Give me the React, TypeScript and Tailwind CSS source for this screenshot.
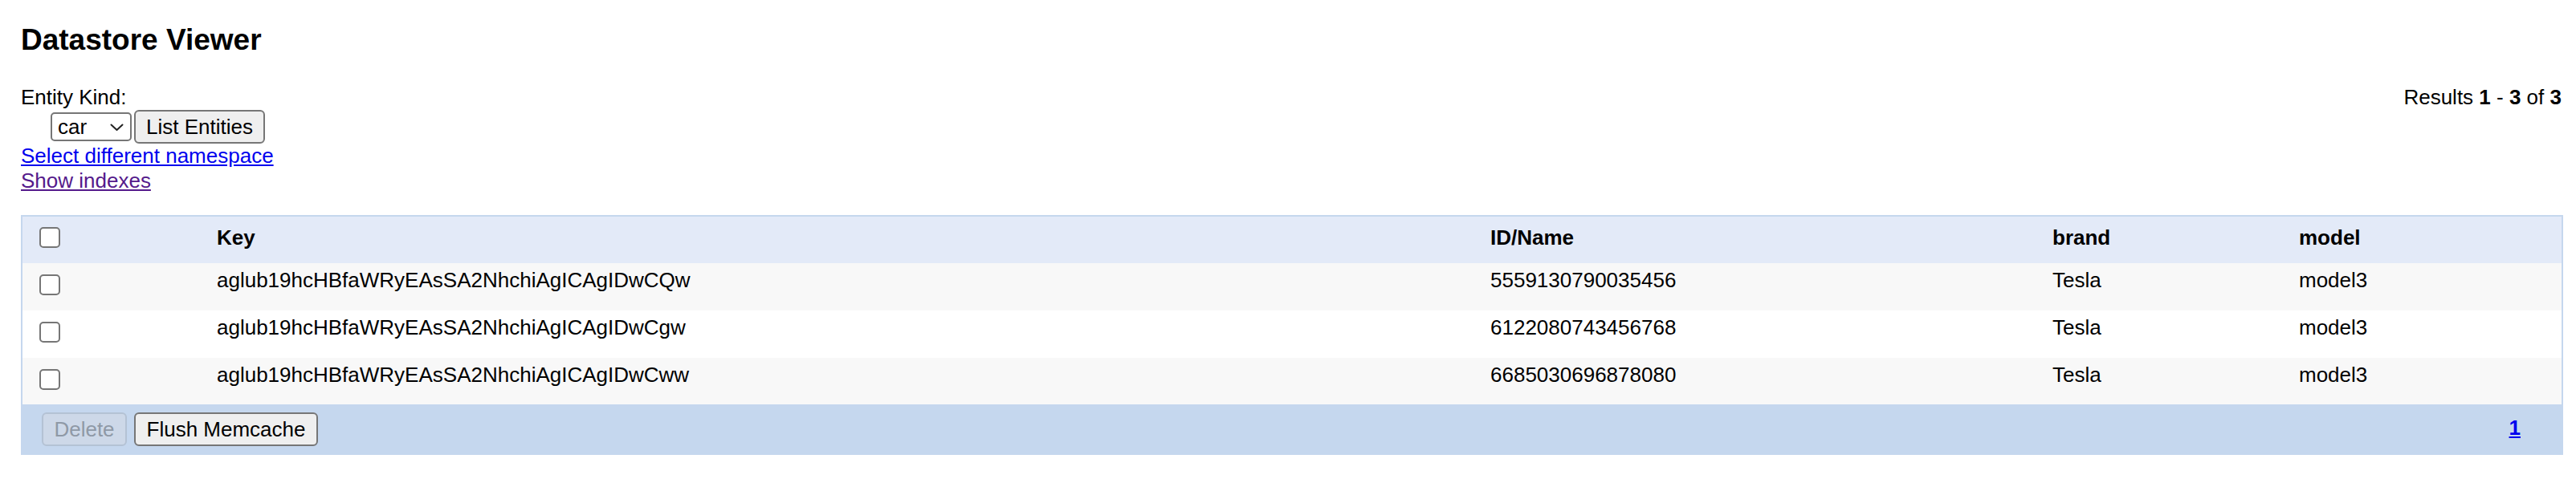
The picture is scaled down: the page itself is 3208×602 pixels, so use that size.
import React from "react";

const rows = [
    { key: "aglub19hcHBfaWRyEAsSA2NhchiAgICAgIDwCQw", id: "5559130790035456", brand: "Tesla", model: "model3" },
    { key: "aglub19hcHBfaWRyEAsSA2NhchiAgICAgIDwCgw", id: "6122080743456768", brand: "Tesla", model: "model3" },
    { key: "aglub19hcHBfaWRyEAsSA2NhchiAgICAgIDwCww", id: "6685030696878080", brand: "Tesla", model: "model3" },
];

function Box() {
    return (
        <span className="block w-[26px] h-[26px] border-2 border-[#767676] rounded-[5px] bg-white" />
    );
}

export default function App() {
    return (
        <div className="min-h-screen bg-white pl-[26px] pr-[16px] text-black text-[26px] font-['Liberation_Sans',Arial,sans-serif]">
            <h1 className="pt-[29px] text-[37px] font-bold leading-[41px]">Datastore Viewer</h1>

            {/* kind picker + result count */}
            <div className="mt-[36px] flex justify-between items-start">
                <div className="flex flex-col items-start">
                    <div className="leading-[30px]">Entity Kind:</div>
                    <div className="flex items-center h-[43px] ml-[37px] gap-[3px]">
                        <div className="relative w-[101px] h-[36px] border-2 border-[#767676] rounded-[5px] bg-white flex items-center pl-[7px]">
                            <span className="leading-[30px]">car</span>
                            <svg className="absolute right-[8px] top-[12px]" width="17" height="10" viewBox="0 0 17 10" fill="none">
                                <path d="M1.5 1.5 L8.5 8 L15.5 1.5" stroke="#222" strokeWidth="2" strokeLinecap="round" strokeLinejoin="round" />
                            </svg>
                        </div>
                        <button className="h-[42px] w-[163px] bg-[#efefef] border-2 border-[#767676] rounded-[6px] leading-[30px]">
                            List Entities
                        </button>
                    </div>
                    <a href="#" className="leading-[31px] text-[#0000ee] underline">Select different namespace</a>
                    <a href="#" className="leading-[31px] text-[#551a8b] underline">Show indexes</a>
                </div>
                <div className="leading-[30px] mr-[2px]">
                    Results <b>1</b> - <b>3</b> of <b>3</b>
                </div>
            </div>

            {/* entity table */}
            <div className="mt-[27px] border-2 border-[#c5d7ee]">
                <div className="flex h-[58px] bg-[#e3eaf8] font-bold">
                    <div className="w-[242px] shrink-0 pl-[21px] pt-[13px]"><Box /></div>
                    <div className="w-[1586px] shrink-0 pt-[11px] leading-[30px]">Key</div>
                    <div className="w-[700px] shrink-0 pt-[11px] leading-[30px]">ID/Name</div>
                    <div className="w-[307px] shrink-0 pt-[11px] leading-[30px]">brand</div>
                    <div className="flex-1 pt-[11px] leading-[30px]">model</div>
                </div>
                {rows.map((r, i) => (
                    <div key={r.id} className={`flex ${i === 2 ? "h-[58px]" : "h-[59px]"} ${i % 2 === 0 ? "bg-[#f8f8f8]" : "bg-white"}`}>
                        <div className="w-[242px] shrink-0 pl-[21px] pt-[14px]"><Box /></div>
                        <div className="w-[1586px] shrink-0 pt-[6px] leading-[30px]">{r.key}</div>
                        <div className="w-[700px] shrink-0 pt-[6px] leading-[30px]">{r.id}</div>
                        <div className="w-[307px] shrink-0 pt-[6px] leading-[30px]">{r.brand}</div>
                        <div className="flex-1 pt-[6px] leading-[30px]">{r.model}</div>
                    </div>
                ))}
                <div className="flex items-start justify-between h-[61px] bg-[#c5d7ee] pl-[24px] pr-[51px] pt-[10px]">
                    <div className="flex gap-[9px]">
                        <button disabled className="h-[42px] w-[106px] bg-[#cdd8e8] border-2 border-[#b4c2d4] rounded-[6px] text-[#8f99a6] leading-[30px]">
                            Delete
                        </button>
                        <button className="h-[42px] w-[229px] bg-[#efefef] border-2 border-[#767676] rounded-[6px] leading-[30px]">
                            Flush Memcache
                        </button>
                    </div>
                    <a href="#" className="mt-[4px] font-bold text-[#0000ee] underline leading-[30px]">1</a>
                </div>
            </div>
        </div>
    );
}
